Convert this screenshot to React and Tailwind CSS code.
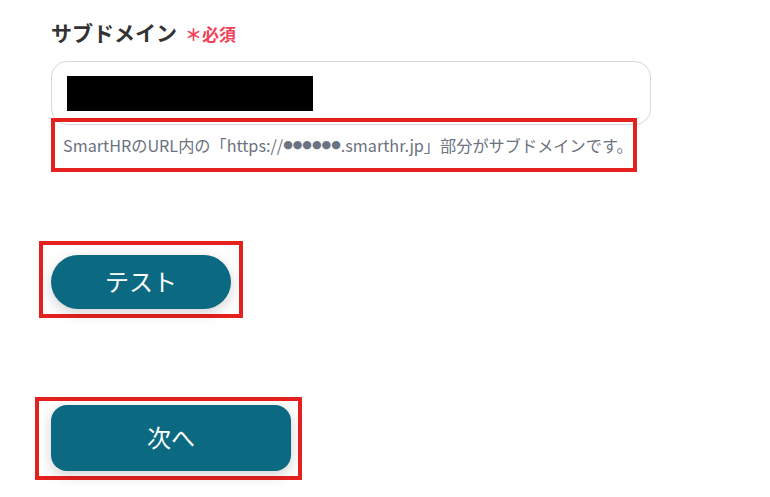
import React from "react";

const App = () => {
  return (
    <div className="min-h-screen bg-white pl-[51px] pt-[17px] font-['Noto_Sans_CJK_JP','Noto_Sans',sans-serif]">
      <div className="flex items-baseline gap-[8px] h-[30px] leading-[30px]">
        <span className="text-[21px] font-bold text-[#333333]">サブドメイン</span>
        <span className="text-[17px] font-bold text-[#f0435b]">＊必須</span>
      </div>

      <div className="mt-[14px] w-[600px] h-[64px] rounded-[16px] border border-[#d4d7dc] flex items-center pl-[15px]">
        <div className="w-[246px] h-[35px] bg-black" />
      </div>

      <div className="relative -mt-[7px] w-[586px] h-[54px] border-4 border-[#e5211f] flex items-center pl-[8px] text-[16.2px] text-[#6b7280] whitespace-nowrap">
        SmartHRのURL内の「https://
        <span className="font-['DejaVu_Sans',sans-serif] text-[11px]">●●●●●●</span>
        .smarthr.jp」部分がサブドメインです。
      </div>

      <div className="mt-[69px] -ml-[12px] w-[204px] h-[77px] border-4 border-[#e5211f] pl-[8px] pt-[10px]">
        <button className="w-[180px] h-[54px] rounded-full bg-[#0b6a81] text-white text-[24px] leading-none pb-[3px] shadow-[0_4px_14px_rgba(0,0,0,0.18)]">
          テスト
        </button>
      </div>

      <div className="mt-[79px] -ml-[16px] w-[267px] h-[83px] border-4 border-[#e5211f] pl-[12px] pt-[4px]">
        <button className="w-[240px] h-[66px] rounded-[16px] bg-[#0b6a81] text-white text-[24px] leading-none pb-[3px] shadow-[0_4px_14px_rgba(0,0,0,0.18)]">
          次へ
        </button>
      </div>
    </div>
  );
};

export default App;
